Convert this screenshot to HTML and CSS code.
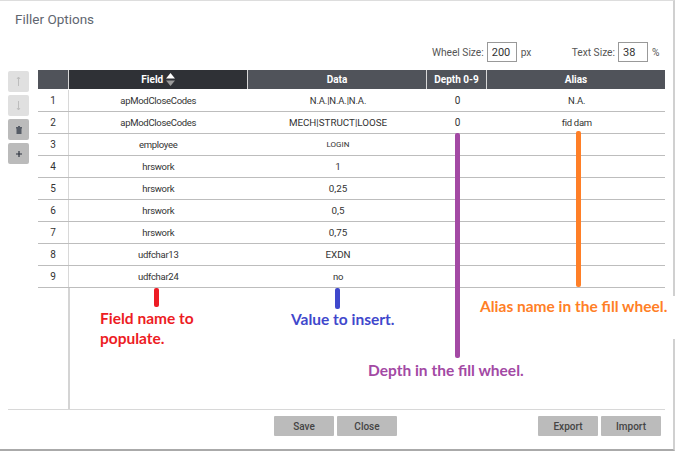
FILE: index.html
```html
<!DOCTYPE html>
<html lang="en">
<head>
    <meta charset="UTF-8">
    <title>Filler Options</title>
    <link rel="stylesheet" href="styles.css">
</head>
<body>
    <div class="modal">
        <h1 class="title">Filler Options</h1>
        <div class="sizes">
            <label>Wheel Size:</label>
            <input class="size-input" type="text" value="200">
            <span class="unit">px</span>
            <label class="text-size">Text Size:</label>
            <input class="size-input" type="text" value="38">
            <span class="unit">%</span>
        </div>
        <div class="content">
            <div class="side-buttons">
                <button class="side-btn off">
                    <svg width="5" height="9" viewBox="0 0 5 9"><path d="M2.500 0v9M1 2l1.500-2L4 2" fill="none" stroke="#bdbdbd"/></svg>
                </button>
                <button class="side-btn off">
                    <svg width="5" height="9" viewBox="0 0 5 9"><path d="M2.500 0v9M1 7l1.500 2L4 7" fill="none" stroke="#bdbdbd"/></svg>
                </button>
                <button class="side-btn">
                    <svg width="6" height="8" viewBox="0 0 6 8"><path d="M0 1h6v1.500H5.500V8h-5V2.500H0zM2 0h2v1H2z" fill="#565c66"/></svg>
                </button>
                <button class="side-btn">
                    <svg width="6" height="6" viewBox="0 0 6 6"><path d="M3 0v6M0 3h6" fill="none" stroke="#2f3540" stroke-width="1.200"/></svg>
                </button>
            </div>
            <div class="table-wrap">
                <table class="grid">
                    <thead>
                        <tr>
                            <th class="col-num"></th>
                            <th class="col-field sorted">Field
                                <svg class="sort" width="9" height="13" viewBox="0 0 9 13"><path d="M4.500 0L9 5.500H0z" fill="#fff"/><path d="M0 7.500h9L4.500 13z" fill="#9a9a9a"/></svg>
                            </th>
                            <th class="col-data">Data</th>
                            <th class="col-depth">Depth 0-9</th>
                            <th>Alias</th>
                        </tr>
                    </thead>
                    <tbody>
                        <tr><td>1</td><td class="name">apModCloseCodes</td><td class="tight">N.A.|N.A.|N.A.</td><td>0</td><td class="tight">N.A.</td></tr>
                        <tr><td>2</td><td class="name">apModCloseCodes</td><td class="data">MECH|STRUCT|LOOSE</td><td>0</td><td class="name">fid dam</td></tr>
                        <tr><td>3</td><td class="name">employee</td><td class="small">LOGIN</td><td></td><td></td></tr>
                        <tr><td>4</td><td class="name">hrswork</td><td class="data">1</td><td></td><td></td></tr>
                        <tr><td>5</td><td class="name">hrswork</td><td class="data">0,25</td><td></td><td></td></tr>
                        <tr><td>6</td><td class="name">hrswork</td><td class="data">0,5</td><td></td><td></td></tr>
                        <tr><td>7</td><td class="name">hrswork</td><td class="data">0,75</td><td></td><td></td></tr>
                        <tr><td>8</td><td class="name">udfchar13</td><td class="data">EXDN</td><td></td><td></td></tr>
                        <tr><td>9</td><td class="name">udfchar24</td><td class="name">no</td><td></td><td></td></tr>
                    </tbody>
                </table>
                <div class="table-rest"></div>
            </div>
        </div>
        <div class="footer">
            <div class="footer-left">
                <button class="btn">Save</button>
                <button class="btn">Close</button>
            </div>
            <div class="footer-right">
                <button class="btn">Export</button>
                <button class="btn">Import</button>
            </div>
        </div>
    </div>

    <!-- annotations drawn on top of the screenshot -->
    <div class="mark mark-field"></div>
    <div class="mark mark-value"></div>
    <div class="mark mark-depth"></div>
    <div class="mark mark-alias"></div>
    <div class="note note-field">Field name to<br>populate.</div>
    <div class="note note-value">Value to insert.</div>
    <div class="note note-depth">Depth in the fill wheel.</div>
    <div class="note note-alias">Alias name in the fill wheel.</div>
</body>
</html>
```

FILE: styles.css
```css
body {
    margin: 0;
    background: #fff;
    font-family: Roboto, "Liberation Sans", sans-serif;
    font-size: 10px;
    color: #333;
    position: relative;
    width: 675px;
    height: 451px;
    overflow: hidden;
}
.modal {
    box-sizing: border-box;
    width: 675px;
    height: 451px;
    border-top: 1px solid #ddd;
    border-right: 2px solid #d0d0d0;
    border-bottom: 2px solid #aaa;
    padding: 0 8px 0 8px;
    display: flex;
    flex-direction: column;
}
.title {
    margin: 10px 0 0 7px;
    font-size: 13.5px;
    font-weight: 400;
    line-height: 16px;
    color: #5f6670;
}
.sizes {
    display: flex;
    align-items: center;
    justify-content: flex-end;
    margin-top: 15px;
    height: 20px;
    font-size: 10.2px;
    color: #555;
}
.text-size {
    margin-left: 38px;
}
.size-input {
    box-sizing: border-box;
    width: 30px;
    height: 20px;
    margin: 0 3px 0 3px;
    padding: 1px 4px;
    border: 1px solid #999;
    font: 11px Roboto, sans-serif;
    color: #333;
}
.unit {
    width: 13px;
    margin-left: 1px;
}
.content {
    display: flex;
    margin-top: 8px;
    height: 339px;
}
.side-buttons {
    width: 21px;
    margin-right: 9px;
    padding-top: 1px;
    display: flex;
    flex-direction: column;
    gap: 3px;
}
.side-btn {
    width: 21px;
    height: 21px;
    padding: 0;
    border: 0;
    border-radius: 2px;
    background: #bbb;
    display: flex;
    align-items: center;
    justify-content: center;
}
.side-btn.off {
    background: #e0e0e0;
}
.table-wrap {
    width: 627px;
    display: flex;
    flex-direction: column;
}
.grid {
    width: 627px;
    table-layout: fixed;
    border-collapse: collapse;
}
.grid th {
    height: 19px;
    padding: 0;
    background: #50535a;
    background-clip: padding-box;
    color: #fff;
    font-size: 10px;
    font-weight: 700;
    border-left: 1px solid #d8d8d8;
    border-bottom: 1px solid #fff;
}
.grid th:first-child {
    border-left: 0;
}
.grid th.sorted {
    background: #2f3136;
    background-clip: padding-box;
}
.sort {
    vertical-align: -3px;
}
.col-num {
    width: 30px;
}
.col-field,
.col-data {
    width: 178px;
}
.col-depth {
    width: 59px;
}
.grid td {
    height: 21px;
    padding: 0;
    text-align: center;
    border-bottom: 1px solid #bdbdbd;
    color: #333;
}
.grid td:first-child {
    border-right: 1px solid #d8d8d8;
}
.grid td + td + td {
    padding-left: 2px;
}
.grid td.name {
    font-size: 9.5px;
    letter-spacing: -0.3px;
}
.grid td.data {
    font-size: 9.8px;
}
.grid td.tight {
    font-size: 9.5px;
    letter-spacing: -0.15px;
}
.grid td.small {
    font-size: 8px;
}
.table-rest {
    flex: 1;
    width: 30px;
    border-right: 2px solid #d4d4d4;
}
.footer {
    display: flex;
    justify-content: space-between;
    width: 657px;
    box-sizing: border-box;
    border-top: 1px solid #d8d8d8;
    padding: 6px 4px 0 266px;
}
.footer-left,
.footer-right {
    display: flex;
    gap: 3px;
}
.btn {
    width: 60px;
    height: 20px;
    padding: 0;
    border: 0;
    border-radius: 1px;
    background: #bbb;
    color: #444;
    font: 500 10px Roboto, sans-serif;
}
.mark {
    position: absolute;
    width: 5px;
    border-radius: 2px;
}
.mark-field {
    left: 154px;
    top: 288px;
    height: 19px;
    background: #ed1c24;
}
.mark-value {
    left: 335px;
    top: 288px;
    height: 21px;
    background: #3f48cc;
}
.mark-depth {
    left: 455px;
    top: 133px;
    height: 225px;
    background: #a349a4;
}
.mark-alias {
    left: 576px;
    top: 131px;
    height: 156px;
    background: #ff7f27;
}
.note {
    position: absolute;
    font-family: Lato, sans-serif;
    font-size: 15.5px;
    font-weight: 700;
    line-height: 20px;
    white-space: nowrap;
}
.note-field {
    left: 100px;
    top: 308px;
    color: #ed1c24;
}
.note-value {
    left: 291px;
    top: 309px;
    color: #3f48cc;
}
.note-depth {
    left: 368px;
    top: 360px;
    color: #a349a4;
}
/* white patch behind this note also hides the modal's right border */
.note-alias {
    left: 475px;
    right: 0;
    top: 296px;
    height: 43px;
    padding-left: 5px;
    background: #fff;
    color: #ff7f27;
}
```
